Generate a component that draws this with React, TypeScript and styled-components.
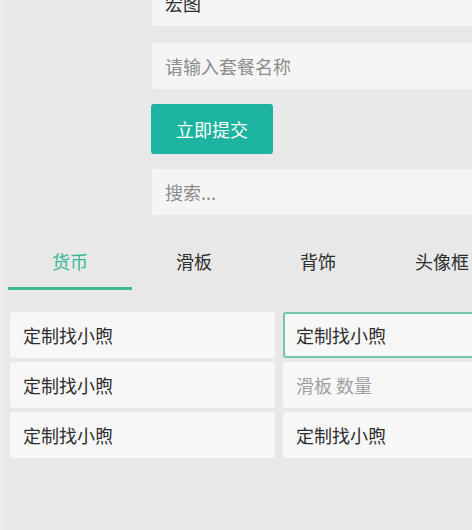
import React, { useState } from 'react';
import styled, { createGlobalStyle } from 'styled-components';

const GlobalStyle = createGlobalStyle`
  html, body {
    margin: 0;
    padding: 0;
    background: #e8e8e8;
    overflow: hidden;
  }
  body {
    font-family: "Noto Sans CJK SC", "Noto Sans", sans-serif;
  }
`;

const Page = styled.div`
  width: 556px;
  height: 560px;
  margin-top: -20px;
  background: #e8e8e8;
  border-left: 3px solid #ececec;
  box-sizing: border-box;
`;

const Form = styled.div`
  display: flex;
  flex-direction: column;
  align-items: flex-start;
  padding-left: 149px;
  gap: 15px;
`;

const Field = styled.div<{ $placeholder?: boolean }>`
  width: 100%;
  height: 46px;
  box-sizing: border-box;
  display: flex;
  align-items: center;
  padding-left: 13px;
  background: #f5f5f5;
  border-radius: 2px;
  font-size: 18px;
  color: ${(p) => (p.$placeholder ? '#8c8c8c' : '#2e2e2e')};
`;

const FirstField = styled(Field)`
  margin-bottom: 2px;
`;

const SubmitButton = styled.button`
  width: 122px;
  height: 50px;
  margin-left: -1px;
  border: none;
  border-radius: 3px;
  background: #1cb3a0;
  color: #fff;
  font-family: inherit;
  font-size: 18px;
  cursor: pointer;
`;

const Tabs = styled.div`
  display: flex;
  padding: 0 5px;
  margin-top: 20px;
`;

const Tab = styled.div<{ $active?: boolean }>`
  width: 124px;
  height: 55px;
  box-sizing: border-box;
  display: flex;
  align-items: center;
  justify-content: center;
  font-size: 18px;
  color: ${(p) => (p.$active ? '#34b896' : '#2e2e2e')};
  border-bottom: 3px solid ${(p) => (p.$active ? '#3cb88c' : 'transparent')};
  cursor: pointer;
`;

const Grid = styled.div`
  display: grid;
  grid-template-columns: 265px 265px;
  column-gap: 8px;
  row-gap: 4px;
  padding: 22px 0 0 7px;
`;

const Cell = styled.div<{ $focused?: boolean; $placeholder?: boolean }>`
  height: 46px;
  box-sizing: border-box;
  display: flex;
  align-items: center;
  padding-left: ${(p) => (p.$focused ? '11px' : '13px')};
  background: #f7f7f7;
  border: ${(p) => (p.$focused ? '2px solid #74c8a6' : 'none')};
  border-radius: 3px;
  font-size: 18px;
  color: ${(p) => (p.$placeholder ? '#a0a0a0' : '#2e2e2e')};
`;

const tabs = ['货币', '滑板', '背饰', '头像框'];

const cells = [
  { text: '定制找小煦' },
  { text: '定制找小煦', focused: true },
  { text: '定制找小煦' },
  { text: '滑板 数量', placeholder: true },
  { text: '定制找小煦' },
  { text: '定制找小煦' },
];

const App: React.FC = () => {
  const [active, setActive] = useState(0);

  return (
    <>
      <GlobalStyle />
      <Page>
        <Form>
          <FirstField>宏图</FirstField>
          <Field $placeholder>请输入套餐名称</Field>
          <SubmitButton>立即提交</SubmitButton>
          <Field $placeholder>搜索...</Field>
        </Form>
        <Tabs>
          {tabs.map((t, i) => (
            <Tab key={t} $active={i === active} onClick={() => setActive(i)}>
              {t}
            </Tab>
          ))}
        </Tabs>
        <Grid>
          {cells.map((c, i) => (
            <Cell key={i} $focused={c.focused} $placeholder={c.placeholder}>
              {c.text}
            </Cell>
          ))}
        </Grid>
      </Page>
    </>
  );
};

export default App;
